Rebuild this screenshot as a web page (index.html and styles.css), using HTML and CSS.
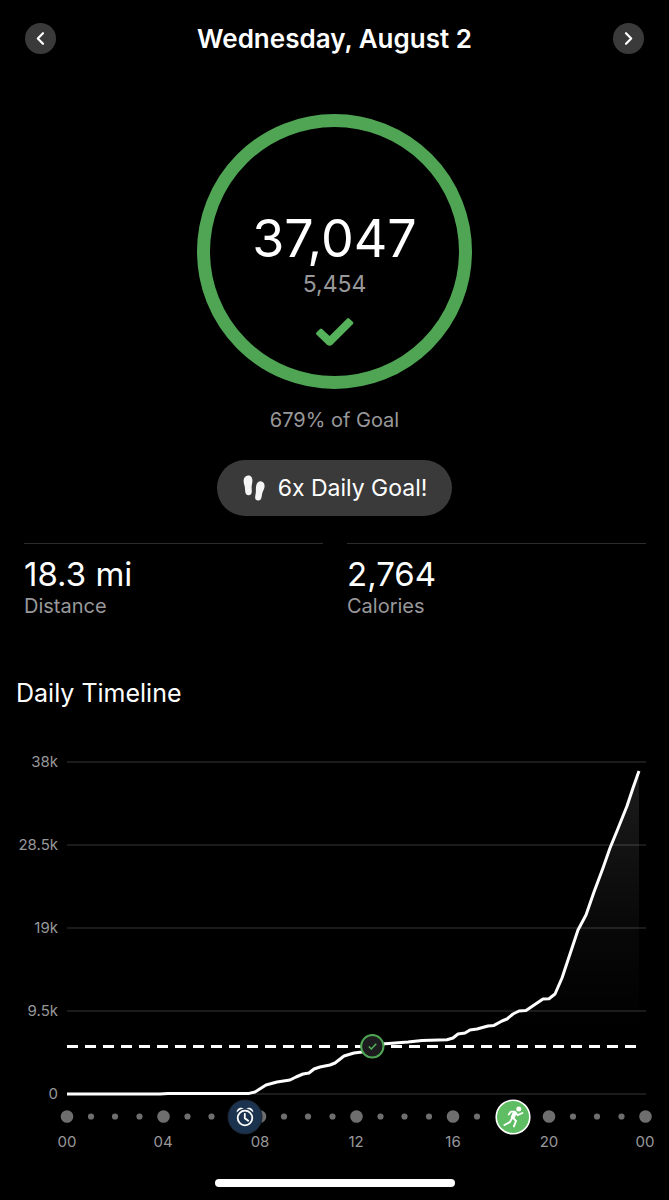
FILE: index.html
```html
<!DOCTYPE html>
<html lang="en">
<head>
  <meta charset="UTF-8">
  <meta name="viewport" content="width=device-width, initial-scale=1.0">
  <title>Wednesday, August 2</title>
  <link rel="stylesheet" href="styles.css">
</head>
<body>
  <!-- Date navigation -->
  <header class="day-nav">
    <button type="button" class="nav-button" aria-label="Previous day">
      <svg width="31" height="31" viewBox="0 0 31 31"><path d="M18 10.2 L12.8 15.5 L18 20.8"/></svg>
    </button>
    <h1 class="day-title">Wednesday, August 2</h1>
    <button type="button" class="nav-button" aria-label="Next day">
      <svg width="31" height="31" viewBox="0 0 31 31"><path d="M13 10.2 L18.2 15.5 L13 20.8"/></svg>
    </button>
  </header>

  <main>
    <!-- Step goal -->
    <section class="goal">
      <div class="ring">
        <div class="ring-steps">37,047</div>
        <div class="ring-target">5,454</div>
        <svg class="ring-check" width="40" height="30" viewBox="0 0 40 30">
          <path d="M1.4 15.6 L5 11.9 Q6 11 7 11.9 L14.6 18.9 L32.2 1.4 Q33.2 0.5 34.2 1.4 L38 5 Q38.8 6 38 7 L17.2 27.8 Q14.6 29.6 12 27.8 L1.4 17.6 Q0.6 16.6 1.4 15.6 Z"/>
        </svg>
      </div>
      <p class="goal-percent">679% of Goal</p>
      <div class="badge">
        <svg class="badge-icon" width="24" height="28" viewBox="0 0 24 28">
          <path d="M6.2 1.6 C9.2 1.4 10.7 3.8 10.4 7.6 C10.2 9.9 9.6 11.2 9.6 13.2 L9.8 17.6 C9.8 20 8.7 21.2 6.6 21.2 C4.4 21.2 3.4 20 3.2 17.6 L2.9 13.4 C2.7 11.2 1.7 9.6 1.6 7.2 C1.5 3.9 3.2 1.8 6.2 1.6 Z"/>
          <path d="M18.9 7.3 C21.7 7.8 23 10.2 22.5 13.2 C22.1 15.5 20.8 17 20.3 19.1 L19.6 23 C19 25.7 17.8 26.9 15.7 26.5 C13.6 26.1 12.8 24.6 13.2 22.2 L13.8 18.7 C14.1 16.7 13.7 15.3 14 12.8 C14.5 9.2 16.1 6.9 18.9 7.3 Z"/>
        </svg>
        <span>6x Daily Goal!</span>
      </div>
    </section>

    <!-- Totals -->
    <dl class="stats">
      <div class="stat">
        <dt>Distance</dt>
        <dd>18.3 mi</dd>
      </div>
      <div class="stat">
        <dt>Calories</dt>
        <dd>2,764</dd>
      </div>
    </dl>

    <!-- Timeline chart, one hour is about 24 units wide -->
    <section class="timeline">
      <h2 class="timeline-title">Daily Timeline</h2>
      <svg class="chart" viewBox="0 0 669 420" role="img" aria-label="Steps by hour">
        <defs>
          <linearGradient id="area-fade" x1="0" y1="0" x2="0" y2="1">
            <stop offset="0" stop-color="#fff" stop-opacity="0.11"/>
            <stop offset="0.5" stop-color="#fff" stop-opacity="0.03"/>
            <stop offset="0.8" stop-color="#fff" stop-opacity="0"/>
          </linearGradient>
        </defs>

        <path class="grid-line" d="M67 22 H646 M67 105 H646 M67 188 H646 M67 271 H646 M67 354 H646"/>
        <g class="y-labels">
          <text x="58" y="27">38k</text>
          <text x="58" y="110">28.5k</text>
          <text x="58" y="193">19k</text>
          <text x="58" y="276">9.5k</text>
          <text x="58" y="359">0</text>
        </g>

        <path class="area" d="M67 354 H250 L266 345 L290 340 L309 333 L330 325 L344 316 L372 309 L385 304 L422 300 L447 300 L458 294 L488 286 L507 279 L519 271 L526 270 L543 259 L549 259 L555 254 L562 238 L578 190 L586 175 L603 128 L617 91 L627 66 L639 31 V354 Z"/>
        <path class="goal-line" d="M67 306.5 H636"/>
        <path class="steps-line" d="M67 354 H160 L168 353.4 H249 L255 352 L266 345 L277 342 L290 340 L296 337 L303 334 L309 333 L314 329 L320 327 L330 325 L335 323 L344 316 L354 313 L362 312 L372 309 L385 303.7 L395 303 L408 302 L422 300.5 L447 299.7 L453 298 L458 294 L465 293 L470 290 L477 289 L488 286 L494 285.4 L502 281 L507 279 L513 274 L519 271 L526 270.5 L543 259 L549 258.7 L555 254 L562 238 L570 214 L578 190 L586 175 L594 152 L603 128 L610 108 L617 91 L627 66 L633 48 L639 31"/>

        <!-- goal reached -->
        <circle class="reached" cx="372.3" cy="306.3" r="11.2"/>
        <path class="reached-check" d="M368.8 306.5 L371.3 309 L376.2 303.7"/>

        <g class="hours">
          <circle cx="67" cy="376.5" r="6.3"/>
          <circle cx="91" cy="376.5" r="3.1"/>
          <circle cx="115" cy="376.5" r="3.1"/>
          <circle cx="139.5" cy="376.5" r="3.1"/>
          <circle cx="163.5" cy="376.5" r="6.3"/>
          <circle cx="187.5" cy="376.5" r="3.1"/>
          <circle cx="211.5" cy="376.5" r="3.1"/>
          <circle cx="236" cy="376.5" r="3.1"/>
          <circle cx="260" cy="376.5" r="6.3"/>
          <circle cx="284" cy="376.5" r="3.1"/>
          <circle cx="308" cy="376.5" r="3.1"/>
          <circle cx="332.5" cy="376.5" r="3.1"/>
          <circle cx="356.5" cy="376.5" r="6.3"/>
          <circle cx="380.5" cy="376.5" r="3.1"/>
          <circle cx="404.5" cy="376.5" r="3.1"/>
          <circle cx="429" cy="376.5" r="3.1"/>
          <circle cx="453" cy="376.5" r="6.3"/>
          <circle cx="477" cy="376.5" r="3.1"/>
          <circle cx="501" cy="376.5" r="3.1"/>
          <circle cx="525" cy="376.5" r="3.1"/>
          <circle cx="549" cy="376.5" r="6.3"/>
          <circle cx="573" cy="376.5" r="3.1"/>
          <circle cx="597" cy="376.5" r="3.1"/>
          <circle cx="621.5" cy="376.5" r="3.1"/>
          <circle cx="645.5" cy="376.5" r="6.3"/>
        </g>
        <g class="x-labels">
          <text x="67" y="407">00</text>
          <text x="163" y="407">04</text>
          <text x="260" y="407">08</text>
          <text x="356" y="407">12</text>
          <text x="453" y="407">16</text>
          <text x="549" y="407">20</text>
          <text x="645" y="407">00</text>
        </g>

        <!-- wake up -->
        <g transform="translate(245 377)">
          <circle class="wake-bg" r="17"/>
          <circle class="wake-line" cy="1" r="7.3"/>
          <path class="wake-line" d="M-0.2 -3.2 V1.2 L3.2 3.8"/>
          <path class="wake-bell" d="M-8.3 -4.6 C-8.4 -8.6 -4.6 -10.4 -1.2 -8.7 C-3.9 -7.9 -6.2 -6.6 -8.3 -4.6 Z M8.3 -4.6 C8.4 -8.6 4.6 -10.4 1.2 -8.7 C3.9 -7.9 6.2 -6.6 8.3 -4.6 Z"/>
        </g>

        <!-- workout -->
        <g transform="translate(513 377)">
          <circle class="run-bg" r="16.8"/>
          <circle class="run-head" cx="5.8" cy="-8" r="2.5"/>
          <path class="run-torso" d="M1.6 -4 L-0.2 0.2"/>
          <path class="run-limb" d="M1.4 -5.4 L-2 -5.4 L-4.2 -2.6 M2.4 -4.8 L4.6 -1.8 L9.4 -4 M0.2 0.8 L3 4 L0.9 9.4 M-1.2 1.6 L-3.2 5.2 L-8.6 8"/>
        </g>
      </svg>
    </section>
  </main>

  <div class="home-indicator"></div>
</body>
</html>
```

FILE: styles.css
```css
body {
  margin: 0;
  background-color: #000;
  color: #fff;
  font-family: Inter, "Liberation Sans", sans-serif;
}

h1, h2, p, dl, dd {
  margin: 0;
  font-weight: 400;
}

/* Date navigation */
.day-nav {
  display: flex;
  justify-content: space-between;
  align-items: center;
  padding: 23px 25px 0;
}

.day-title {
  font-size: 26px;
  line-height: 31px;
  font-weight: 600;
}

.nav-button {
  width: 31px;
  height: 31px;
  padding: 0;
  border: none;
  border-radius: 50%;
  background-color: #3a3a3a;
  cursor: pointer;
}

.nav-button svg {
  display: block;
  fill: none;
  stroke: #fff;
  stroke-width: 2.2;
  stroke-linecap: round;
  stroke-linejoin: round;
}

/* Step goal */
.goal {
  display: flex;
  flex-direction: column;
  align-items: center;
  padding-top: 60px;
}

.ring {
  box-sizing: border-box;
  width: 275px;
  height: 275px;
  padding-top: 80px;
  border: 13px solid #4fa553;
  border-radius: 50%;
  display: flex;
  flex-direction: column;
  align-items: center;
}

.ring-steps {
  font-size: 52px;
  line-height: 64px;
}

.ring-target {
  font-size: 23px;
  line-height: 26px;
  color: #98989a;
}

.ring-check {
  margin-top: 20px;
  fill: #55b25a;
}

.goal-percent {
  margin-top: 16px;
  font-size: 20px;
  line-height: 30px;
  color: #98989a;
}

.badge {
  display: flex;
  align-items: center;
  gap: 12px;
  margin-top: 25px;
  padding: 0 25px;
  border-radius: 28px;
  background-color: #3a3a3a;
  font-size: 23px;
  line-height: 56px;
}

.badge-icon {
  fill: #f5f5f5;
}

/* Totals */
.stats {
  display: grid;
  grid-template-columns: 1fr 1fr;
  gap: 24px;
  padding: 27px 23px 0 24px;
}

.stat {
  display: flex;
  flex-direction: column-reverse;
  padding-top: 8px;
  border-top: 1px solid #2c2c2c;
}

.stat dt {
  font-size: 20px;
  line-height: 20px;
  color: #98989a;
}

.stat dd {
  font-size: 33px;
  line-height: 44px;
}

/* Timeline */
.timeline {
  padding-top: 60px;
}

.timeline-title {
  padding: 0 16px;
  font-size: 25px;
  line-height: 34px;
}

.chart {
  display: block;
  width: 100%;
  margin-top: 30px;
}

.grid-line {
  stroke: #252525;
  stroke-width: 1.3;
}

.y-labels,
.x-labels {
  fill: #98989a;
  font-size: 15px;
}

.y-labels {
  text-anchor: end;
}

.x-labels {
  text-anchor: middle;
}

.area {
  fill: url(#area-fade);
}

.goal-line {
  stroke: #fff;
  stroke-width: 3;
  stroke-dasharray: 11 7;
}

.steps-line {
  fill: none;
  stroke: #fff;
  stroke-width: 3;
  stroke-linejoin: round;
}

.reached {
  fill: #1c1c1e;
  stroke: #4fa553;
  stroke-width: 2;
}

.reached-check {
  fill: none;
  stroke: #55b25a;
  stroke-width: 1.5;
}

.hours {
  fill: #6e6e6e;
}

.wake-bg {
  fill: #1c3350;
  stroke: #1c2530;
}

.wake-line {
  fill: none;
  stroke: #fff;
  stroke-width: 1.8;
  stroke-linecap: round;
}

.wake-bell {
  fill: #fff;
}

.run-bg {
  fill: #5fbd63;
  stroke: #fff;
  stroke-width: 1.6;
}

.run-head {
  fill: #fff;
}

.run-torso,
.run-limb {
  fill: none;
  stroke: #fff;
  stroke-linecap: round;
  stroke-linejoin: round;
}

.run-torso {
  stroke-width: 4;
}

.run-limb {
  stroke-width: 1.9;
}

.home-indicator {
  width: 240px;
  height: 8px;
  margin: 19px auto 12px;
  border-radius: 4px;
  background-color: #fff;
}
```
